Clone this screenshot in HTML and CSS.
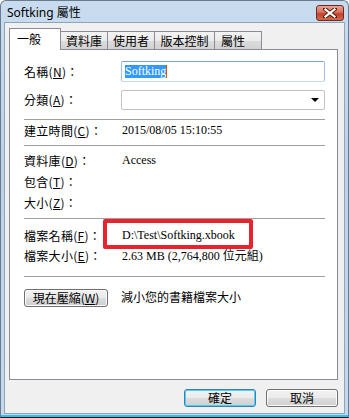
FILE: index.html
```html
<!DOCTYPE html>
<html lang="zh-Hant">
<head>
    <meta charset="UTF-8">
    <title>Softking 屬性</title>
    <link rel="stylesheet" href="styles.css">
</head>
<body>
    <div class="window">
        <div class="titlebar">
            <span class="title">Softking 屬性</span>
            <button class="close-btn" title="關閉">
                <svg width="14" height="10" viewBox="0 0 14 10">
                    <path d="M2 1 L12 9 M12 1 L2 9" stroke="#5a1a10" stroke-width="4" stroke-linecap="square"/>
                    <path d="M2.5 1.5 L11.5 8.5 M11.5 1.5 L2.5 8.5" stroke="#fff" stroke-width="2.2" stroke-linecap="square"/>
                </svg>
            </button>
        </div>

        <div class="client">
            <div class="tabs">
                <div class="tab active">一般</div>
                <div class="tab">資料庫</div>
                <div class="tab">使用者</div>
                <div class="tab">版本控制</div>
                <div class="tab">屬性</div>
            </div>

            <div class="panel">
                <div class="row first">
                    <span class="label">名稱(<u>N</u>)：</span>
                    <div class="textbox"><span class="selected">Softking</span></div>
                </div>
                <div class="row gap">
                    <span class="label">分類(<u>A</u>)：</span>
                    <div class="combo"><span class="arrow"></span></div>
                </div>

                <div class="sep sep-1"></div>
                <div class="row">
                    <span class="label">建立時間(<u>C</u>)：</span>
                    <span class="value">2015/08/05 15:10:55</span>
                </div>

                <div class="sep sep-2"></div>
                <div class="group">
                    <div class="row">
                        <span class="label">資料庫(<u>D</u>)：</span>
                        <span class="value">Access</span>
                    </div>
                    <div class="row">
                        <span class="label">包含(<u>T</u>)：</span>
                        <span class="value"></span>
                    </div>
                    <div class="row">
                        <span class="label">大小(<u>Z</u>)：</span>
                        <span class="value"></span>
                    </div>
                </div>

                <div class="sep sep-3"></div>
                <div class="group file-group">
                    <div class="row short">
                        <span class="label">檔案名稱(<u>F</u>)：</span>
                        <span class="value marked">D:\Test\Softking.xbook</span>
                    </div>
                    <div class="row short">
                        <span class="label">檔案大小(<u>E</u>)：</span>
                        <span class="value">2.63 MB (2,764,800 位元組)</span>
                    </div>
                </div>

                <div class="sep sep-4"></div>
                <div class="compress-row">
                    <button class="btn compress-btn">現在壓縮(<u>W</u>)</button>
                    <span class="hint">減小您的書籍檔案大小</span>
                </div>
            </div>

            <div class="footer">
                <button class="btn default">確定</button>
                <button class="btn">取消</button>
            </div>
        </div>
    </div>
</body>
</html>
```

FILE: styles.css
```css
body {
    margin: 0;
    width: 349px;
    height: 418px;
    overflow: hidden;
    font-family: "Noto Sans CJK TC", "Noto Sans", sans-serif;
    font-size: 12px;
    color: #000;
}

.window {
    box-sizing: border-box;
    width: 349px;
    height: 418px;
    display: flex;
    flex-direction: column;
    border: 1px solid #6b7a8c;
    border-bottom-color: #111;
    border-radius: 6px 6px 0 0;
    background: linear-gradient(180deg, #c9dcef 0%, #bcd2e9 40%, #c5d9ee 100%);
    padding: 0 3px 3px 3px;
    box-shadow: inset 0 -2px 0 #2ac3f0;
}

/* 標題列 */
.titlebar {
    height: 21px;
    display: flex;
    align-items: center;
    justify-content: space-between;
}

.title {
    padding-left: 3px;
    font-family: "Noto Sans", "Noto Sans CJK TC", sans-serif;
    font-size: 12px;
    padding-top: 1px;
}

.close-btn {
    width: 28px;
    height: 16px;
    margin-right: 1px;
    margin-top: 2px;
    padding: 0;
    border: 1px solid #6d2a22;
    border-radius: 3px;
    background: linear-gradient(180deg, #e8a493 0%, #d7705d 45%, #c2422c 55%, #d06a4d 100%);
    display: flex;
    align-items: center;
    justify-content: center;
}

.client {
    flex: 1;
    background: #f0f0f0;
    border: 1px solid #8fa4bb;
    padding: 5px 6px 0 4px;
    display: flex;
    flex-direction: column;
}

/* 分頁 */
.tabs {
    display: flex;
    align-items: flex-end;
    height: 21px;
    position: relative;
    z-index: 1;
}

.tab {
    box-sizing: border-box;
    height: 18px;
    width: 47px;
    padding: 0;
    margin-right: 0;
    border: 1px solid #898c95;
    border-bottom: none;
    border-left: none;
    background: linear-gradient(180deg, #f3f3f3 0%, #ebebeb 50%, #dcdcdc 51%, #d2d2d2 100%);
    line-height: 17px;
    text-align: center;
    white-space: nowrap;
}

.tab:nth-child(4) { width: 60px; }
.tab:nth-child(5) { width: 47px; text-align: left; padding-left: 6px; }

.tab.active {
    width: 52px;
    height: 22px;
    margin-bottom: -1px;
    border-left: 1px solid #898c95;
    background: #fff;
    text-align: left;
    padding-left: 7px;
    line-height: 19px;
}

.panel {
    height: 331px;
    box-sizing: border-box;
    background: #fff;
    border: 1px solid #898c95;
    padding: 12px 12px 0 14px;
}

.row {
    display: grid;
    grid-template-columns: 97px 1fr;
    align-items: center;
    height: 21px;
}

.row.first {
    margin-top: -1px;
}

.row.gap {
    margin-top: 7px;
}

.row.short {
    height: 20px;
}

.label {
    white-space: nowrap;
    letter-spacing: 0.3px;
}

.label u, .compress-btn u {
    text-underline-offset: 1px;
}

.value {
    font-family: "Liberation Serif", "Noto Sans CJK TC", serif;
    font-size: 12px;
    padding-left: 1px;
    white-space: nowrap;
}

.textbox, .combo {
    box-sizing: border-box;
    height: 21px;
    border: 1px solid #abadb3;
    border-radius: 2px;
    background: #fff;
    display: flex;
    align-items: center;
    padding-left: 3px;
}

.textbox {
    border-color: #7da2ce #a4c0e0 #c5daed #a4c0e0;
}

.selected {
    background: #3399ff;
    color: #fff;
    font-family: "Liberation Serif", serif;
    font-size: 12px;
    line-height: 13px;
    border-right: 1px solid #c85a00;
}

.combo {
    height: 20px;
    border-color: #c2c2c2;
    justify-content: flex-end;
    padding-right: 5px;
}

.arrow {
    width: 0;
    height: 0;
    border-left: 4px solid transparent;
    border-right: 4px solid transparent;
    border-top: 4px solid #000;
}

.sep {
    height: 1px;
    background: #a0a0a0;
}

.sep-1 { margin-top: 9px; }
.sep-2 { margin-top: 4px; }
.sep-3 { margin-top: 5px; }
.sep-4 { margin-top: 11px; }

.group {
    margin-top: 4px;
}

.file-group {
    margin-top: 6px;
}

.marked {
    position: relative;
}

/* 紅框標示 */
.marked::after {
    content: "";
    position: absolute;
    left: -18px;
    top: -9px;
    width: 142px;
    height: 22px;
    border: 4px solid #e8232d;
    border-radius: 2px;
}

.compress-row {
    display: flex;
    align-items: center;
    margin-top: 12px;
    gap: 13px;
}

.hint {
    margin-top: -3px;
}

.btn {
    box-sizing: border-box;
    height: 18px;
    padding: 0;
    border: 1px solid #707070;
    border-radius: 3px;
    background: linear-gradient(180deg, #f2f2f2 0%, #ebebeb 48%, #dddddd 52%, #cfcfcf 100%);
    font-family: "Noto Sans CJK TC", sans-serif;
    font-size: 12px;
    line-height: 16px;
    color: #000;
    box-shadow: inset 0 0 0 1px #fcfcfc;
}

.compress-btn {
    width: 84px;
}

.footer {
    display: flex;
    justify-content: flex-end;
    gap: 10px;
    padding-top: 9px;
    padding-right: 0;
}

.footer .btn {
    width: 72px;
    height: 18px;
}

.btn.default {
    border-color: #3c7fb1;
    box-shadow: inset 0 0 0 1px #48d1fe;
}
```
